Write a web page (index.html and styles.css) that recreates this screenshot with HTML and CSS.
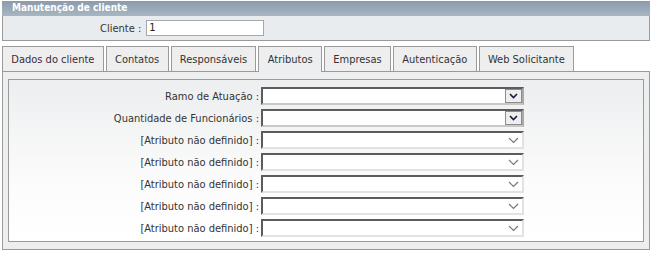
FILE: index.html
```html
<!DOCTYPE html>
<html lang="pt-BR">
<head>
  <meta charset="UTF-8">
  <title>Manutenção de cliente</title>
  <link rel="stylesheet" href="styles.css">
</head>
<body>
  <div class="window">
    <div class="title">Manutenção de cliente</div>
    <div class="client-box">
      <label class="client-label">Cliente :</label>
      <div class="client-input">1</div>
    </div>

    <div class="tabs">
      <div class="tab">Dados do cliente</div>
      <div class="tab">Contatos</div>
      <div class="tab">Responsáveis</div>
      <div class="tab tab-active">Atributos</div>
      <div class="tab">Empresas</div>
      <div class="tab">Autenticação</div>
      <div class="tab">Web Solicitante</div>
    </div>

    <div class="panel">
      <div class="fields">
        <div class="field-label">Ramo de Atuação :</div>
        <div class="select select-btn">
          <span class="arrow"><svg width="9" height="6" viewBox="0 0 9 6"><path d="M1 1 L4.5 4.5 L8 1" fill="none" stroke="#1a1a40" stroke-width="1.6"/></svg></span>
        </div>

        <div class="field-label">Quantidade de Funcionários :</div>
        <div class="select select-btn">
          <span class="arrow"><svg width="9" height="6" viewBox="0 0 9 6"><path d="M1 1 L4.5 4.5 L8 1" fill="none" stroke="#1a1a40" stroke-width="1.6"/></svg></span>
        </div>

        <div class="field-label">[Atributo não definido] :</div>
        <div class="select">
          <span class="chevron"><svg width="11" height="7" viewBox="0 0 11 7"><path d="M1 1 L5.5 5.5 L10 1" fill="none" stroke="#777" stroke-width="1.2"/></svg></span>
        </div>

        <div class="field-label">[Atributo não definido] :</div>
        <div class="select">
          <span class="chevron"><svg width="11" height="7" viewBox="0 0 11 7"><path d="M1 1 L5.5 5.5 L10 1" fill="none" stroke="#777" stroke-width="1.2"/></svg></span>
        </div>

        <div class="field-label">[Atributo não definido] :</div>
        <div class="select">
          <span class="chevron"><svg width="11" height="7" viewBox="0 0 11 7"><path d="M1 1 L5.5 5.5 L10 1" fill="none" stroke="#777" stroke-width="1.2"/></svg></span>
        </div>

        <div class="field-label">[Atributo não definido] :</div>
        <div class="select">
          <span class="chevron"><svg width="11" height="7" viewBox="0 0 11 7"><path d="M1 1 L5.5 5.5 L10 1" fill="none" stroke="#777" stroke-width="1.2"/></svg></span>
        </div>

        <div class="field-label">[Atributo não definido] :</div>
        <div class="select">
          <span class="chevron"><svg width="11" height="7" viewBox="0 0 11 7"><path d="M1 1 L5.5 5.5 L10 1" fill="none" stroke="#777" stroke-width="1.2"/></svg></span>
        </div>
      </div>
    </div>
  </div>
</body>
</html>
```

FILE: styles.css
```css
/* Global */
body {
  margin: 0;
  padding: 0;
  background: #fff;
  font-family: "DejaVu Sans Condensed", "DejaVu Sans", sans-serif;
  font-size: 11px;
  color: #333;
}

.window {
  width: 648px;
  margin: 0 2px;
}

/* Title bar */
.title {
  height: 15px;
  line-height: 14px;
  margin-top: 1px;
  padding-left: 10px;
  background: linear-gradient(#8a9bac, #a9b6c2);
  color: #fff;
  font-size: 10px;
  font-weight: bold;
}

/* Client box */
.client-box {
  height: 24px;
  border: 1px solid #9a9a9a;
  border-top: none;
  background: #e9ecee;
  display: flex;
  align-items: center;
  padding-left: 97px;
  gap: 5px;
}
.client-input {
  width: 114px;
  height: 14px;
  line-height: 14px;
  padding-left: 2px;
  border: 1px solid #a3a8ab;
  background: #fff;
  color: #222;
}

/* Tabs */
.tabs {
  display: flex;
  gap: 1px;
  margin-top: 5px;
  position: relative;
  z-index: 1;
}
.tab {
  height: 24px;
  line-height: 25px;
  padding: 0 8.3px;
  border: 1px solid #9a9a9a;
  border-bottom: none;
  background: #eeeeee;
  margin-right: 1px;
}
.tab:first-child {
  color: #3d2b3b;
}
.tab-active {
  background: #eceeef;
  height: 25px;
  margin-bottom: -1px;
}

/* Panel */
.panel {
  border: 1px solid #9a9a9a;
  background: #eceeef;
  padding: 7px 5px 7px 5px;
}
.fields {
  border: 1px solid #9a9a9a;
  background: linear-gradient(#eceeef, #fbfbfb 60%, #fff);
  padding: 7px 0 4px 0;
  display: grid;
  grid-template-columns: 250px 263px;
  column-gap: 2px;
  row-gap: 4px;
  align-items: center;
}
.field-label {
  text-align: right;
  white-space: nowrap;
}

/* Selects */
.select {
  height: 14px;
  background: #fff;
  border-top: 2px solid #5c5c5c;
  border-left: 2px solid #5c5c5c;
  border-right: 2px solid #e2e2e2;
  border-bottom: 2px solid #e2e2e2;
  display: flex;
  justify-content: flex-end;
  align-items: center;
}
.select-btn {
  border-right-color: #a9a9a9;
  border-bottom-color: #c8c8c8;
}
.arrow {
  width: 17px;
  height: 14px;
  box-sizing: border-box;
  border: 1px solid #8c8c8c;
  background: #eeeeee;
  display: flex;
  align-items: center;
  justify-content: center;
}
.chevron {
  width: 17px;
  display: flex;
  justify-content: center;
}
```
